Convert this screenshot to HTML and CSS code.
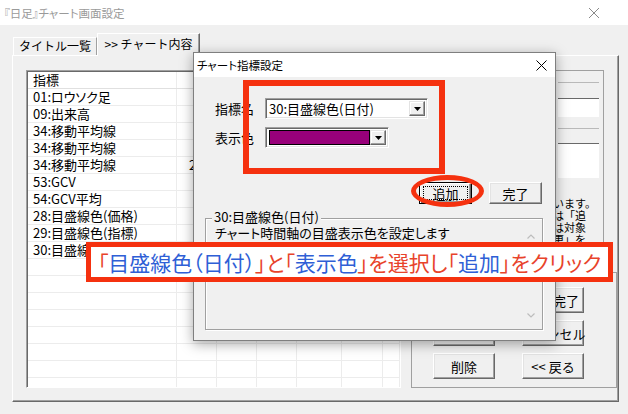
FILE: index.html
```html
<!DOCTYPE html>
<html lang="ja">
<head>
<meta charset="utf-8">
<title>『日足』チャート画面設定</title>
<link rel="stylesheet" href="styles.css">
</head>
<body>
<div class="window">
  <div class="titlebar">
    <span class="title">『日足』チャート画面設定</span>
    <svg class="close" width="10" height="10" viewBox="0 0 10 10"><path d="M0 0L10 10M10 0L0 10" stroke="#8a8a8a" stroke-width="1"/></svg>
  </div>
  <div class="tabs">
    <div class="tab">タイトル一覧</div>
    <div class="tab active">&gt;&gt; チャート内容</div>
  </div>
  <div class="panel">
    <div class="list">
      <div class="row head"><div class="c">指標</div><div class="c"></div><div class="c"></div><div class="c"></div><div class="c"></div><div class="c"></div><div class="c"></div></div>
      <div class="row"><div class="c">01:ロウソク足</div><div class="c"></div><div class="c"></div><div class="c"></div><div class="c"></div><div class="c"></div><div class="c"></div></div>
      <div class="row"><div class="c">09:出来高</div><div class="c"></div><div class="c"></div><div class="c"></div><div class="c"></div><div class="c"></div><div class="c"></div></div>
      <div class="row"><div class="c">34:移動平均線</div><div class="c"></div><div class="c"></div><div class="c"></div><div class="c"></div><div class="c"></div><div class="c"></div></div>
      <div class="row"><div class="c">34:移動平均線</div><div class="c"></div><div class="c"></div><div class="c"></div><div class="c"></div><div class="c"></div><div class="c"></div></div>
      <div class="row"><div class="c">34:移動平均線</div><div class="c num">25</div><div class="c"></div><div class="c"></div><div class="c"></div><div class="c"></div><div class="c"></div></div>
      <div class="row"><div class="c">53:GCV</div><div class="c"></div><div class="c"></div><div class="c"></div><div class="c"></div><div class="c"></div><div class="c"></div></div>
      <div class="row"><div class="c">54:GCV平均</div><div class="c"></div><div class="c"></div><div class="c"></div><div class="c"></div><div class="c"></div><div class="c"></div></div>
      <div class="row"><div class="c">28:目盛線色(価格)</div><div class="c"></div><div class="c"></div><div class="c"></div><div class="c"></div><div class="c"></div><div class="c"></div></div>
      <div class="row"><div class="c">29:目盛線色(指標)</div><div class="c"></div><div class="c"></div><div class="c"></div><div class="c"></div><div class="c"></div><div class="c"></div></div>
      <div class="row"><div class="c">30:目盛線色(日付)</div><div class="c"></div><div class="c"></div><div class="c"></div><div class="c"></div><div class="c"></div><div class="c"></div></div>
      <div class="row"><div class="c"></div><div class="c"></div><div class="c"></div><div class="c"></div><div class="c"></div><div class="c"></div><div class="c"></div></div>
      <div class="row"><div class="c"></div><div class="c"></div><div class="c"></div><div class="c"></div><div class="c"></div><div class="c"></div><div class="c"></div></div>
      <div class="row"><div class="c"></div><div class="c"></div><div class="c"></div><div class="c"></div><div class="c"></div><div class="c"></div><div class="c"></div></div>
      <div class="row"><div class="c"></div><div class="c"></div><div class="c"></div><div class="c"></div><div class="c"></div><div class="c"></div><div class="c"></div></div>
      <div class="row"><div class="c"></div><div class="c"></div><div class="c"></div><div class="c"></div><div class="c"></div><div class="c"></div><div class="c"></div></div>
      <div class="row"><div class="c"></div><div class="c"></div><div class="c"></div><div class="c"></div><div class="c"></div><div class="c"></div><div class="c"></div></div>
      <div class="row"><div class="c"></div><div class="c"></div><div class="c"></div><div class="c"></div><div class="c"></div><div class="c"></div><div class="c"></div></div>
      <div class="row"><div class="c"></div><div class="c"></div><div class="c"></div><div class="c"></div><div class="c"></div><div class="c"></div><div class="c"></div></div>
    </div>
    <div class="side">
      <div class="ugroup">
        <div class="fa"></div>
        <div class="fb"></div>
        <div class="fc"></div>
        <div class="fd"></div>
        <div class="notes">
          <div>います。</div>
          <div>は「追</div>
          <div>は対象</div>
          <div>更」を</div>
        </div>
      </div>
      <div class="lgroup">
        <div class="btn">登録</div>
        <div class="btn">設定完了</div>
        <div class="btn">変更</div>
        <div class="btn">キャンセル</div>
        <div class="btn">削除</div>
        <div class="btn">&lt;&lt; 戻る</div>
      </div>
    </div>
  </div>
</div>

<div class="dialog">
  <div class="dlg-title">
    <span class="dlg-name">チャート指標設定</span>
    <svg class="dlg-close" width="11" height="11" viewBox="0 0 11 11"><path d="M0.5 0.5L10.5 10.5M10.5 0.5L0.5 10.5" stroke="#000" stroke-width="1"/></svg>
  </div>
  <div class="dlg-body">
    <div class="field">
      <span class="flabel">指標名</span>
      <div class="combo name">
        <span class="combo-text">30:目盛線色(日付)</span>
        <span class="drop"><svg width="7" height="4" viewBox="0 0 7 4"><path d="M0 0H7L3.5 4Z" fill="#000"/></svg></span>
      </div>
    </div>
    <div class="field">
      <span class="flabel">表示色</span>
      <div class="combo color">
        <span class="swatch"></span>
        <span class="drop"><svg width="7" height="4" viewBox="0 0 7 4"><path d="M0 0H7L3.5 4Z" fill="#000"/></svg></span>
      </div>
    </div>
    <div class="btnrow">
      <div class="btn default"><span class="focus">追加</span></div>
      <div class="btn">完了</div>
    </div>
    <div class="gbox">
      <div class="glabel">30:目盛線色(日付)</div>
      <div class="gbody">
        <div class="gtext">チャート時間軸の目盛表示色を設定します</div>
        <div class="gscroll">
          <svg width="8" height="5" viewBox="0 0 8 5"><path d="M0.5 4.5L4 1L7.5 4.5" fill="none" stroke="#bdbdbd" stroke-width="1.2"/></svg>
          <svg width="8" height="5" viewBox="0 0 8 5"><path d="M0.5 0.5L4 4L7.5 0.5" fill="none" stroke="#bdbdbd" stroke-width="1.2"/></svg>
        </div>
      </div>
    </div>
  </div>
</div>

<div class="mark-rect"></div>
<div class="mark-oval"></div>
<div class="banner"><span class="r">「</span><span class="b">目盛線色（日付）</span><span class="r">」と「</span><span class="b">表示色</span><span class="r">」を選択し「</span><span class="b">追加</span><span class="r">」をクリック</span></div>
</body>
</html>
```

FILE: styles.css
```css
* { box-sizing: border-box; }
html, body { margin: 0; padding: 0; }
body {
  width: 628px;
  height: 414px;
  overflow: hidden;
  position: relative;
  background: #f0f0f0;
  color: #000;
  font-family: "Noto Sans CJK JP", "Noto Sans", sans-serif;
  font-size: 12px;
}

/* main window */
.window { width: 628px; height: 414px; }
.titlebar {
  height: 25px;
  background: #fff;
  display: flex;
  align-items: center;
  padding-left: 4px;
}
.title {
  flex: 1;
  color: #9a9a9a;
  font-size: 11.5px;
  font-feature-settings: "palt";
}
.close { margin-right: 29px; }

.tabs {
  height: 30px;
  display: flex;
  align-items: flex-end;
  padding-left: 13px;
}
.tab {
  height: 18px;
  width: 84px;
  border-top: 1px solid #fff;
  border-left: 1px solid #fff;
  border-right: 1px solid #a0a0a0;
  display: flex;
  align-items: center;
  justify-content: center;
  padding-bottom: 1px;
  font-size: 12px;
  line-height: 14px;
}
.tab.active {
  height: 23px;
  width: 103px;
  margin-bottom: -1px;
  background: #f0f0f0;
  border-right-color: #696969;
  box-shadow: inset -1px 0 0 #a0a0a0;
  position: relative;
  z-index: 1;
  padding-bottom: 3px;
}

.panel {
  margin-left: 12px;
  width: 607px;
  height: 347px;
  border-top: 1px solid #fff;
  border-left: 1px solid #fff;
  border-right: 1px solid #696969;
  border-bottom: 1px solid #696969;
  box-shadow: inset -1px -1px 0 #a0a0a0;
  display: flex;
  gap: 10px;
  padding: 14px 0 0 13px;
}

.list {
  width: 375px;
  height: 318px;
  background: #fff;
  border: 1px solid;
  border-color: #a0a0a0 #fff #fff #a0a0a0;
  overflow: hidden;
  position: relative;
}
.list::before {
  content: "";
  position: absolute;
  left: 0; top: 0; right: 0; bottom: 0;
  box-shadow: inset 1px 1px 0 #696969;
  pointer-events: none;
}
.row {
  display: grid;
  grid-template-columns: 150px 40px 40px 40px 45px 41px 1fr;
  height: 17px;
  border-bottom: 1px solid #ececec;
}
.row.head { height: 18px; border-bottom-color: #e0e0e0; }
.c {
  border-right: 1px solid #ececec;
  line-height: 16px;
  white-space: nowrap;
  font-size: 13px;
  font-feature-settings: "palt";
}
.row .c:first-child { padding-left: 6px; }
.row.head .c:first-child { line-height: 17px; }
.c.num { padding-left: 12px; }

.side {
  width: 207px;
  display: flex;
  flex-direction: column;
}
.ugroup {
  width: 193px;
  height: 195px;
  border: 1px solid #a0a0a0;
  display: flex;
  flex-direction: column;
  align-items: flex-end;
  padding-right: 4px;
}
.fa { width: 41px; height: 16px; margin-top: 11px; border-top: 1px solid #b9b9b9; }
.fb { width: 41px; height: 19px; background: #fff; border-top: 1px solid #696969; }
.fc { width: 41px; height: 15px; margin-top: 11px; border-top: 1px solid #b9b9b9; }
.fd { width: 41px; height: 35px; background: #fff; border-top: 1px solid #696969; }
.notes {
  width: 46px;
  margin-top: 19px;
  font-size: 11px;
  line-height: 12px;
  white-space: nowrap;
}
.lgroup {
  width: 206px;
  height: 116px;
  margin-top: 7px;
  border: 1px solid #a0a0a0;
  display: grid;
  grid-template-columns: 62px 62px;
  grid-auto-rows: 26px;
  column-gap: 27px;
  row-gap: 7px;
  align-content: start;
  padding: 14px 0 0 21px;
}

.btn {
  background: #f0f0f0;
  border: 1px solid;
  border-color: #fff #696969 #696969 #fff;
  box-shadow: inset -1px -1px 0 #a0a0a0, inset 1px 1px 0 #e3e3e3;
  display: flex;
  align-items: center;
  justify-content: center;
  font-size: 13px;
  white-space: nowrap;
}

/* dialog */
.dialog {
  position: absolute;
  left: 193px;
  top: 52px;
  width: 363px;
  height: 289px;
  background: #f0f0f0;
  border: 1px solid #7f7f7f;
  box-shadow: 0 3px 12px rgba(0, 0, 0, 0.35);
  z-index: 5;
}
.dlg-title {
  height: 24px;
  background: #fff;
  display: flex;
  align-items: center;
  padding-left: 3px;
}
.dlg-name {
  flex: 1;
  font-size: 11.5px;
  font-feature-settings: "palt";
}
.dlg-close { margin-right: 8px; }
.dlg-body { padding-top: 21px; }
.field {
  display: flex;
  align-items: center;
  height: 21px;
  padding-left: 21px;
}
.field + .field { margin-top: 8px; }
.flabel { width: 50px; font-size: 13px; }
.combo {
  height: 21px;
  background: #fff;
  border: 1px solid;
  border-color: #a0a0a0 #fff #fff #a0a0a0;
  box-shadow: inset 1px 1px 0 #696969, inset -1px -1px 0 #e3e3e3;
  display: flex;
  align-items: center;
  padding: 2px;
}
.combo.name { width: 163px; }
.combo.color { width: 124px; }
.combo-text {
  flex: 1;
  font-size: 13px;
  font-feature-settings: "palt";
  padding-left: 1px;
  white-space: nowrap;
}
.swatch {
  width: 101px;
  height: 15px;
  margin-left: 1px;
  background: #98007a;
  border: 1px solid #000;
}
.drop {
  width: 16px;
  height: 15px;
  margin-left: auto;
  background: #f0f0f0;
  border: 1px solid;
  border-color: #e3e3e3 #696969 #696969 #e3e3e3;
  box-shadow: inset -1px -1px 0 #a0a0a0, inset 1px 1px 0 #fff;
  display: flex;
  align-items: center;
  justify-content: center;
}
.btnrow {
  display: flex;
  justify-content: flex-end;
  gap: 17px;
  margin-top: 34px;
  padding-right: 13px;
}
.btnrow .btn { width: 53px; height: 22px; }
.btn.default {
  border-color: #000;
  box-shadow: inset 1px 1px 0 #fff, inset -1px -1px 0 #696969, inset -2px -2px 0 #a0a0a0;
  padding: 3px;
}
.focus {
  flex: 1;
  align-self: stretch;
  border: 1px dotted #000;
  display: flex;
  align-items: center;
  justify-content: center;
}
.gbox {
  margin: 14px 12px 0 11px;
  height: 112px;
  border: 1px solid #a0a0a0;
  box-shadow: inset 1px 1px 0 #fff, 1px 1px 0 #fff;
}
.glabel {
  margin: -10px 0 0 6px;
  padding: 0 2px;
  width: fit-content;
  background: #f0f0f0;
  font-size: 13px;
  font-feature-settings: "palt";
  line-height: 16px;
}
.gbody {
  display: flex;
  height: 103px;
}
.gtext {
  flex: 1;
  padding-left: 9px;
  font-size: 13px;
  font-feature-settings: "palt";
  line-height: 16px;
  white-space: nowrap;
}
.gscroll {
  width: 17px;
  margin-right: 3px;
  display: flex;
  flex-direction: column;
  justify-content: space-between;
  align-items: center;
  padding: 9px 0 10px;
}

/* annotations */
.mark-rect {
  position: absolute;
  left: 243px;
  top: 80px;
  width: 202px;
  height: 94px;
  border: 6px solid #f5310f;
  z-index: 10;
}
.mark-oval {
  position: absolute;
  left: 411px;
  top: 175px;
  width: 73px;
  height: 32px;
  border: 5px solid #f5310f;
  border-radius: 50%;
  z-index: 10;
}
.banner {
  position: absolute;
  left: 86px;
  top: 242px;
  width: 527px;
  height: 40px;
  border: 5px solid #f5310f;
  background: #fff;
  display: flex;
  align-items: center;
  justify-content: center;
  font-size: 21px;
  font-feature-settings: "palt";
  white-space: nowrap;
  z-index: 10;
}
.banner .r { color: #e8432b; }
.banner .b { color: #2f5fd6; }
```
